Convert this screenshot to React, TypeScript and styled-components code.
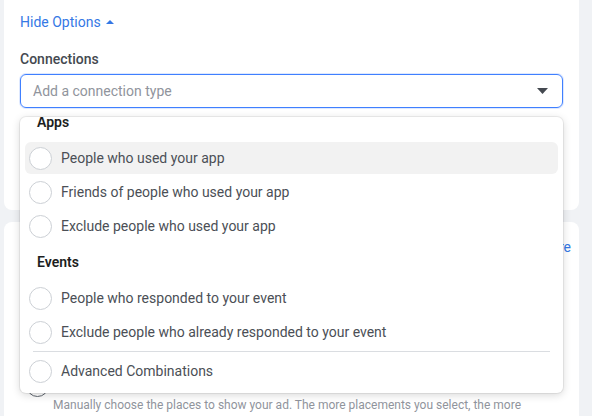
import React from "react";
import styled, { createGlobalStyle } from "styled-components";

const Global = createGlobalStyle`
  html, body { margin: 0; padding: 0; }
  body {
    background: #f0f2f5;
    font-family: Roboto, "Liberation Sans", Arial, sans-serif;
    width: 592px;
    height: 416px;
    overflow: hidden;
  }
  * { box-sizing: border-box; }
`;

const Page = styled.div`
  display: flex;
  flex-direction: column;
  gap: 12px;
  padding: 0 13px 0 4px;
  height: 416px;
  overflow: hidden;
`;

const Card = styled.section<{ $top?: boolean }>`
  background: #fff;
  border-radius: ${(p) => (p.$top ? "0 0 8px 8px" : "8px 8px 0 0")};
  padding: 0 16px;
  flex: none;
`;

const TopCard = styled(Card)`
  height: 210px;
  padding-top: 13px;
  display: flex;
  flex-direction: column;
`;

const BottomCard = styled(Card)`
  flex: 1;
  padding-top: 16px;
  padding-right: 8px;
  display: flex;
  flex-direction: column;
`;

const ToggleLink = styled.button`
  all: unset;
  display: inline-flex;
  align-items: center;
  gap: 5px;
  font-size: 14px;
  line-height: 18px;
  color: #3578e5;
  cursor: pointer;
  align-self: flex-start;
`;

const Label = styled.div`
  margin-top: 19px;
  font-size: 14px;
  line-height: 18px;
  font-weight: 500;
  color: #444950;
`;

const SelectWrap = styled.div`
  position: relative;
  margin-top: 6px;
`;

const SelectBox = styled.div`
  height: 34px;
  border: 1px solid #4080ff;
  border-radius: 6px;
  box-shadow: 0 0 0 1px rgba(64, 128, 255, 0.18);
  display: flex;
  align-items: center;
  justify-content: space-between;
  padding: 0 14px 0 12px;
`;

const Placeholder = styled.span`
  font-size: 14px;
  color: #90949c;
`;

const Menu = styled.div`
  position: absolute;
  top: 43px;
  left: 0;
  right: 0;
  height: 276px;
  background: #fff;
  border-radius: 6px;
  box-shadow: 0 0 0 1px rgba(0, 0, 0, 0.06), 0 2px 8px rgba(0, 0, 0, 0.16);
  overflow: hidden;
  z-index: 5;
`;

const MenuScroll = styled.div`
  display: flex;
  flex-direction: column;
  gap: 2px;
  padding: 0 5px 6px;
  margin-top: -13px;
`;

const GroupHeader = styled.div`
  height: 36px;
  display: flex;
  align-items: center;
  padding: 0 12px;
  font-size: 14px;
  font-weight: 600;
  color: #1c1e21;
`;

const Option = styled.div<{ $active?: boolean }>`
  height: 32px;
  flex: none;
  display: flex;
  align-items: center;
  gap: 9px;
  padding-left: 4px;
  border-radius: 6px;
  background: ${(p) => (p.$active ? "#f2f2f2" : "transparent")};
  font-size: 14px;
  color: #4b4f56;
`;

const Radio = styled.span<{ $dark?: boolean }>`
  width: 23px;
  height: 23px;
  flex: none;
  border-radius: 50%;
  border: 1px solid ${(p) => (p.$dark ? "#606770" : "#ccd0d5")};
  background: #fff;
`;

const Divider = styled.hr`
  flex: none;
  border: none;
  border-top: 1px solid #dadde1;
  margin: 1px 8px;
`;

const HeadRow = styled.div`
  display: flex;
  justify-content: flex-end;
  height: 18px;
`;

const Link = styled.a`
  font-size: 14px;
  line-height: 18px;
  color: #3578e5;
  text-decoration: none;
`;

const PlacementRow = styled.div`
  margin-top: 118px;
  display: flex;
  align-items: center;
  gap: 10px;
  padding-left: 6px;
  font-size: 14px;
  color: #444950;
`;

const Help = styled.p`
  margin: -1px 0 0 33px;
  font-size: 12px;
  line-height: 18px;
  color: #90949c;
  max-width: 480px;
`;

const Caret = () => (
  <svg width="11" height="6" viewBox="0 0 11 6">
    <path d="M0 0h11L5.5 6z" fill="#444950" />
  </svg>
);

const UpCaret = () => (
  <svg width="8" height="4" viewBox="0 0 8 4">
    <path d="M0 4h8L4 0z" fill="#3578e5" />
  </svg>
);

type Item = { label: string; active?: boolean };

const apps: Item[] = [
  { label: "People who used your app", active: true },
  { label: "Friends of people who used your app" },
  { label: "Exclude people who used your app" },
];
const events: Item[] = [
  { label: "People who responded to your event" },
  { label: "Exclude people who already responded to your event" },
];

export default function App() {
  return (
    <>
      <Global />
      <Page>
        <TopCard $top>
          <ToggleLink>
            Hide Options <UpCaret />
          </ToggleLink>
          <Label>Connections</Label>
          <SelectWrap>
            <SelectBox>
              <Placeholder>Add a connection type</Placeholder>
              <Caret />
            </SelectBox>
            <Menu>
              <MenuScroll>
                <GroupHeader>Apps</GroupHeader>
                {apps.map((i) => (
                  <Option key={i.label} $active={i.active}>
                    <Radio />
                    {i.label}
                  </Option>
                ))}
                <GroupHeader>Events</GroupHeader>
                {events.map((i) => (
                  <Option key={i.label}>
                    <Radio />
                    {i.label}
                  </Option>
                ))}
                <Divider />
                <Option>
                  <Radio />
                  Advanced Combinations
                </Option>
              </MenuScroll>
            </Menu>
          </SelectWrap>
        </TopCard>
        <BottomCard>
          <HeadRow>
            <Link href="#">Learn More</Link>
          </HeadRow>
          <PlacementRow>
            <Radio $dark />
            Manual Placements
          </PlacementRow>
          <Help>
            Manually choose the places to show your ad. The more placements you
            select, the more opportunities you'll have to reach your target
            audience and achieve your business goals.
          </Help>
        </BottomCard>
      </Page>
    </>
  );
}
